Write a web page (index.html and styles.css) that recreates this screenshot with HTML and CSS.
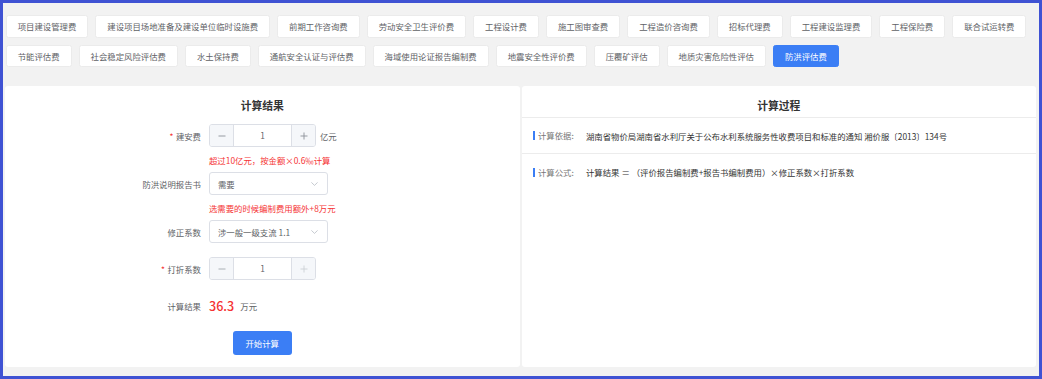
FILE: index.html
```html
<!DOCTYPE html>
<html lang="zh-CN">
<head>
  <meta charset="UTF-8" />
  <title>防洪评估费 - 计算</title>
  <link rel="stylesheet" href="styles.css">
</head>
<body>
  <div class="page">
    <div class="tags">
      <button class="tag">项目建设管理费</button>
      <button class="tag">建设项目场地准备及建设单位临时设施费</button>
      <button class="tag">前期工作咨询费</button>
      <button class="tag">劳动安全卫生评价费</button>
      <button class="tag">工程设计费</button>
      <button class="tag">施工图审查费</button>
      <button class="tag">工程造价咨询费</button>
      <button class="tag">招标代理费</button>
      <button class="tag">工程建设监理费</button>
      <button class="tag">工程保险费</button>
      <button class="tag">联合试运转费</button>
      <button class="tag">节能评估费</button>
      <button class="tag">社会稳定风险评估费</button>
      <button class="tag">水土保持费</button>
      <button class="tag">通航安全认证与评估费</button>
      <button class="tag">海域使用论证报告编制费</button>
      <button class="tag">地震安全性评价费</button>
      <button class="tag">压覆矿评估</button>
      <button class="tag">地质灾害危险性评估</button>
      <button class="tag active">防洪评估费</button>
    </div>

    <div class="panels">
      <section class="panel">
        <h3 class="panel-title">计算结果</h3>

        <div class="form">
          <div class="form-item">
            <label class="form-label"><span class="req">*</span>建安费</label>
            <div class="number">
              <span class="step">
                <svg width="8" height="8" viewBox="0 0 8 8"><path d="M0.5 4h7" stroke="#8c9099" stroke-width="0.9"/></svg>
              </span>
              <span class="number-value">1</span>
              <span class="step plus">
                <svg width="8" height="8" viewBox="0 0 8 8"><path d="M0.5 4h7M4 0.5v7" stroke="#8c9099" stroke-width="0.9"/></svg>
              </span>
            </div>
            <span class="unit">亿元</span>
          </div>
          <div class="hint">超过10亿元，按金额×0.6‰计算</div>

          <div class="form-item">
            <label class="form-label">防洪说明报告书</label>
            <div class="select">
              <span>需要</span>
              <svg class="arrow" width="7" height="4" viewBox="0 0 7 4"><path d="M0.4 0.4L3.5 3.4L6.6 0.4" fill="none" stroke="#b8bcc4" stroke-width="0.8"/></svg>
            </div>
          </div>
          <div class="hint">选需要的时候编制费用额外+8万元</div>

          <div class="form-item spaced">
            <label class="form-label">修正系数</label>
            <div class="select">
              <span>涉一般一级支流 1.1</span>
              <svg class="arrow" width="7" height="4" viewBox="0 0 7 4"><path d="M0.4 0.4L3.5 3.4L6.6 0.4" fill="none" stroke="#b8bcc4" stroke-width="0.8"/></svg>
            </div>
          </div>

          <div class="form-item spaced">
            <label class="form-label"><span class="req">*</span>打折系数</label>
            <div class="number">
              <span class="step">
                <svg width="8" height="8" viewBox="0 0 8 8"><path d="M0.5 4h7" stroke="#a3a7ae" stroke-width="0.9"/></svg>
              </span>
              <span class="number-value">1</span>
              <span class="step plus">
                <svg width="8" height="8" viewBox="0 0 8 8"><path d="M0.5 4h7M4 0.5v7" stroke="#cdd0d6" stroke-width="0.9"/></svg>
              </span>
            </div>
          </div>

          <div class="form-item spaced">
            <label class="form-label">计算结果</label>
            <span class="result-value">36.3</span>
            <span class="unit result-unit">万元</span>
          </div>
        </div>

        <button class="btn-primary">开始计算</button>
      </section>

      <section class="panel">
        <h3 class="panel-title bordered">计算过程</h3>
        <div class="process-row">
          <span class="process-label">计算依据:</span>
          <span class="process-text">湖南省物价局湖南省水利厅关于公布水利系统服务性收费项目和标准的通知 湘价服〔2013〕134号</span>
        </div>
        <div class="process-row">
          <span class="process-label">计算公式:</span>
          <span class="process-text">计算结果 ＝ （评价报告编制费+报告书编制费用）×修正系数×打折系数</span>
        </div>
      </section>
    </div>
  </div>
</body>
</html>
```

FILE: styles.css
```css
:root {
  --azul-borde: #3f52d3;
  --azul: #3b7ef5;
  --gris-fondo: #f2f2f2;
  --blanco: #ffffff;
  --gris-borde: #dcdfe6;
  --linea: #ececec;
  --texto: #333333;
  --texto-suave: #606266;
  --rojo: #f53333;
  --fuente: "Noto Sans CJK SC", "Noto Sans", sans-serif;
}

* {
  box-sizing: border-box;
}

body {
  margin: 0;
  font-family: var(--fuente);
  color: var(--texto);
}

.page {
  width: 1042px;
  height: 379px;
  border: 3px solid var(--azul-borde);
  background-color: var(--gris-fondo);
  padding: 12px 2px 9px 2px;
  display: flex;
  flex-direction: column;
}

/* lista de tipos de cobro */
.tags {
  display: flex;
  flex-wrap: wrap;
  gap: 7px 7px;
  padding-left: 0.7px;
}

.tag {
  height: 22.5px;
  padding: 0 11px;
  font-family: var(--fuente);
  font-size: 8.4px;
  line-height: 20px;
  color: var(--texto-suave);
  background-color: var(--blanco);
  border: 1px solid #ebebeb;
  border-radius: 2.5px;
  cursor: pointer;
  white-space: nowrap;
}

.tag.active {
  background-color: var(--azul);
  border-color: var(--azul);
  color: var(--blanco);
}

.panels {
  flex: 1;
  margin-top: 19px;
  display: flex;
  gap: 2px;
  padding-right: 1px;
}

.panel {
  flex: 1;
  background-color: var(--blanco);
  border-radius: 3px;
}

.panel-title {
  margin: 7px 0 0;
  height: 24px;
  line-height: 24px;
  font-size: 10.8px;
  font-weight: bold;
  text-align: center;
  color: var(--texto);
}

.panel-title.bordered {
  height: 32px;
  margin: 0;
  padding-top: 7px;
  border-bottom: 1px solid var(--linea);
}

/* formulario */
.form {
  margin-top: 7px;
  font-size: 8.4px;
}

.form-item {
  display: flex;
  align-items: center;
  height: 23px;
}

.form-item.spaced {
  margin-top: 14px;
}

.hint + .form-item.spaced {
  margin-top: 6px;
}

.form-label {
  width: 204px;
  padding-right: 8px;
  text-align: right;
  color: var(--texto-suave);
}

.req {
  color: var(--rojo);
  margin-right: 2.5px;
}

.hint {
  margin: 7px 0 6px 204px;
  line-height: 12px;
  color: var(--rojo);
}

.number {
  display: flex;
  width: 107px;
  height: 23px;
  border: 1px solid var(--gris-borde);
  border-radius: 3px;
  overflow: hidden;
}

.step {
  width: 24px;
  display: flex;
  align-items: center;
  justify-content: center;
  background-color: #f5f7fa;
  border-right: 1px solid var(--gris-borde);
}

.step.plus {
  border-right: none;
  border-left: 1px solid var(--gris-borde);
}

.number-value {
  flex: 1;
  text-align: center;
  line-height: 21px;
  color: var(--texto-suave);
}

.unit {
  margin-left: 4px;
  color: var(--texto-suave);
}

.select {
  width: 119px;
  height: 23px;
  border: 1px solid var(--gris-borde);
  border-radius: 3px;
  padding: 0 8px 0 8px;
  display: flex;
  align-items: center;
  justify-content: space-between;
  color: var(--texto-suave);
}

.arrow {
  margin-right: 1px;
}

.result-value {
  font-size: 12.6px;
  font-weight: 500;
  color: var(--rojo);
}

.result-unit {
  margin-left: 6px;
}

.btn-primary {
  display: block;
  margin: 14px auto 0;
  width: 59px;
  height: 24px;
  padding: 0;
  font-family: var(--fuente);
  font-size: 8.4px;
  color: var(--blanco);
  background-color: var(--azul);
  border: none;
  border-radius: 3px;
  cursor: pointer;
}

/* proceso de calculo */
.process-row {
  display: flex;
  align-items: center;
  height: 36px;
  padding-left: 11.5px;
  border-bottom: 1px solid var(--linea);
  font-size: 8.4px;
}

.process-row:last-child {
  border-bottom: none;
}

.process-label {
  width: 53px;
  padding-left: 3px;
  border-left: 2.7px solid var(--azul);
  line-height: 9px;
  color: #777777;
}

.process-text {
  color: var(--texto);
}
```
